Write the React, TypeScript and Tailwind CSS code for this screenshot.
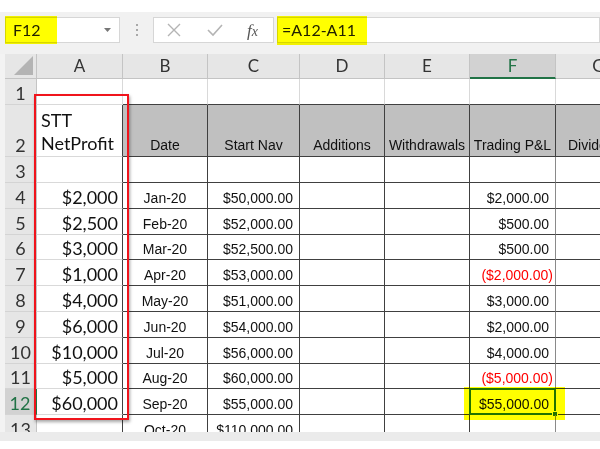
import React from "react";

const LATO = "font-['Lato','Open_Sans',sans-serif]";
const ARIAL = "font-['Liberation_Sans',Arial,sans-serif]";

type Row = {
  n: number;
  h: string;
  a: string;
  b: string;
  c: string;
  f: string;
  neg?: boolean;
};

const rows: Row[] = [
  { n: 3, h: "h-[26px]", a: "", b: "", c: "", f: "" },
  { n: 4, h: "h-[26px]", a: "$2,000", b: "Jan-20", c: "$50,000.00", f: "$2,000.00" },
  { n: 5, h: "h-[26px]", a: "$2,500", b: "Feb-20", c: "$52,000.00", f: "$500.00" },
  { n: 6, h: "h-[25px]", a: "$3,000", b: "Mar-20", c: "$52,500.00", f: "$500.00" },
  { n: 7, h: "h-[26px]", a: "$1,000", b: "Apr-20", c: "$53,000.00", f: "($2,000.00)", neg: true },
  { n: 8, h: "h-[26px]", a: "$4,000", b: "May-20", c: "$51,000.00", f: "$3,000.00" },
  { n: 9, h: "h-[26px]", a: "$6,000", b: "Jun-20", c: "$54,000.00", f: "$2,000.00" },
  { n: 10, h: "h-[26px]", a: "$10,000", b: "Jul-20", c: "$56,000.00", f: "$4,000.00" },
  { n: 11, h: "h-[25px]", a: "$5,000", b: "Aug-20", c: "$60,000.00", f: "($5,000.00)", neg: true },
  { n: 12, h: "h-[26px]", a: "$60,000", b: "Sep-20", c: "$55,000.00", f: "$55,000.00" },
  { n: 13, h: "h-[26px]", a: "", b: "Oct-20", c: "$110,000.00", f: "" },
];

function RowHead({ n, sel }: { n: number; sel?: boolean }) {
  return (
    <div
      className={
        sel
          ? `w-[32px] shrink-0 flex items-end justify-center pb-[1px] bg-[#d2d2d2] border-b border-b-[#d4d4d4] border-r-2 border-r-[#217346] text-[#217346] text-[18px] leading-[20px] ${LATO}`
          : `w-[32px] shrink-0 flex items-end justify-center pb-[1px] bg-[#e6e6e6] border-b border-b-[#d4d4d4] border-r border-r-[#c4c4c4] text-[#333] text-[18px] leading-[20px] ${LATO}`
      }
    >
      {n}
    </div>
  );
}

export default function App() {
  const cols = ["A", "B", "C", "D", "E", "F", "G"];
  const widths = ["w-[86px]", "w-[85px]", "w-[92px]", "w-[85px]", "w-[85px]", "w-[86px]", "w-[86px]"];
  return (
    <div className="w-[600px] h-[449px] bg-white relative overflow-hidden">
      <div className="h-[12px] bg-white" />
      {/* toolbar */}
      <div className="h-[42px] bg-[#f1f1f1] flex items-start pt-[5px] pl-[5px]">
        <div className="w-[115px] h-[26px] bg-white border border-[#d6d6d6] flex items-center">
          <div className={`w-[52px] pl-[7px] text-[16px] text-[#222] ${LATO}`}>F12</div>
          <div className="flex-1" />
          <svg width="7" height="4" viewBox="0 0 7 4" className="mr-[8px]">
            <polygon points="0,0 7,0 3.5,4" fill="#777" />
          </svg>
        </div>
        <div className="w-[33px] h-[26px] flex flex-col items-center justify-center gap-[3px]">
          <div className="w-[2px] h-[2px] bg-[#a8a8a8]" />
          <div className="w-[2px] h-[2px] bg-[#a8a8a8]" />
          <div className="w-[2px] h-[2px] bg-[#a8a8a8]" />
        </div>
        <div className="w-[121px] h-[26px] bg-white border border-[#d6d6d6] flex items-center">
          <svg width="14" height="14" viewBox="0 0 14 14" className="ml-[13px]">
            <path d="M1 1 L13 13 M13 1 L1 13" stroke="#b4b4b4" strokeWidth="1.4" />
          </svg>
          <svg width="16" height="14" viewBox="0 0 16 14" className="ml-[26px]">
            <path d="M1 7 L6 12 L15 2" stroke="#b4b4b4" strokeWidth="1.6" fill="none" />
          </svg>
          <div className="ml-[24px] text-[17px] leading-none text-[#555] italic font-['Liberation_Serif',serif] flex items-end">
            <span>f</span>
            <span className="text-[14px]">x</span>
          </div>
        </div>
        <div className="w-[3px]" />
        <div className="flex-1 h-[26px] bg-white border border-[#d6d6d6] flex items-center">
          <div className={`pl-[4px] text-[16px] text-[#222] ${LATO}`}>=A12-A11</div>
        </div>
      </div>
      {/* grid area */}
      <div className="h-[378px] flex bg-[#f3f3f3]">
        <div className="w-[5px] shrink-0" />
        <div className="flex-1 flex flex-col overflow-hidden bg-white">
          {/* column headers */}
          <div className="h-[25px] flex shrink-0">
            <div className="w-[32px] shrink-0 bg-[#e6e6e6] border-r border-b border-r-[#c4c4c4] border-b-[#c4c4c4] relative">
              <svg width="20" height="20" viewBox="0 0 20 20" className="absolute right-[2px] bottom-[2px]">
                <polygon points="19,0 19,19 0,19" fill="#b4b4b4" />
              </svg>
            </div>
            {cols.map((c, i) =>
              c === "F" ? (
                <div
                  key={c}
                  className={`${widths[i]} shrink-0 bg-[#d2d2d2] border-r border-r-[#c4c4c4] border-b-2 border-b-[#217346] flex items-center justify-center text-[17px] text-[#217346] ${LATO}`}
                >
                  {c}
                </div>
              ) : (
                <div
                  key={c}
                  className={`${widths[i]} shrink-0 bg-[#e6e6e6] border-r border-b border-r-[#c4c4c4] border-b-[#c4c4c4] flex items-center justify-center text-[17px] text-[#333] ${LATO}`}
                >
                  {c}
                </div>
              )
            )}
          </div>
          {/* row 1 */}
          <div className="h-[26px] flex shrink-0">
            <RowHead n={1} />
            <div className="w-[86px] shrink-0 border-r border-b border-r-[#d9d9d9] border-b-[#d9d9d9]" />
            {widths.slice(1).map((w, i) => (
              <div key={i} className={`${w} shrink-0 border-r border-b border-r-[#d9d9d9] border-b-[#404040]`} />
            ))}
          </div>
          {/* row 2 */}
          <div className="h-[52px] flex shrink-0">
            <RowHead n={2} />
            <div
              className={`w-[86px] shrink-0 border-r border-b border-r-[#404040] border-b-[#d9d9d9] flex flex-col justify-end pl-[4px] pb-[1px] text-[18px] leading-[23px] text-[#111] ${LATO}`}
            >
              <div>STT</div>
              <div>NetProfit</div>
            </div>
            {["Date", "Start Nav", "Additions", "Withdrawals", "Trading P&L", "Dividends"].map((t, i) => (
              <div
                key={t}
                className={`${widths[i + 1]} shrink-0 bg-[#c0c0c0] border-r border-b border-r-[#404040] border-b-[#404040] flex items-end justify-center pb-[3px] text-[14px] leading-[16px] text-[#111] whitespace-nowrap ${ARIAL}`}
              >
                <span className={i === 5 ? "pl-[12px] w-full" : ""}>{t}</span>
              </div>
            ))}
          </div>
          {rows.map((r) => (
            <div key={r.n} className={`${r.h} flex shrink-0`}>
              <RowHead n={r.n} sel={r.n === 12} />
              <div
                className={`w-[86px] shrink-0 border-r border-b border-r-[#404040] border-b-[#d9d9d9] flex items-end justify-end pr-[4px] pb-[1px] text-[18px] leading-[20px] text-[#111] ${LATO}`}
              >
                {r.a}
              </div>
              <div
                className={`w-[85px] shrink-0 border-r border-b border-r-[#404040] border-b-[#404040] flex items-end justify-center pb-[2px] text-[14px] leading-[16px] text-[#111] ${ARIAL}`}
              >
                {r.b}
              </div>
              <div
                className={`w-[92px] shrink-0 border-r border-b border-r-[#404040] border-b-[#404040] flex items-end justify-end pr-[6px] pb-[2px] text-[14px] leading-[16px] text-[#111] whitespace-nowrap ${ARIAL}`}
              >
                {r.c}
              </div>
              <div className="w-[85px] shrink-0 border-r border-b border-r-[#404040] border-b-[#404040]" />
              <div className="w-[85px] shrink-0 border-r border-b border-r-[#404040] border-b-[#404040]" />
              <div
                className={
                  r.neg
                    ? `w-[86px] shrink-0 border-r border-b border-r-[#8a8a8a] border-b-[#404040] flex items-end justify-end pr-[2px] pb-[2px] text-[14px] leading-[16px] text-[#ff0000] whitespace-nowrap ${ARIAL}`
                    : `w-[86px] shrink-0 border-r border-b border-r-[#8a8a8a] border-b-[#404040] flex items-end justify-end pr-[6px] pb-[2px] text-[14px] leading-[16px] text-[#111] whitespace-nowrap relative ${ARIAL}`
                }
              >
                {r.f}
                {r.n === 12 && (
                  <>
                    <div className="absolute -left-px -top-px -right-px -bottom-px border-2 border-[#217346]" />
                    <div className="absolute -right-[3px] -bottom-[3px] w-[6px] h-[6px] bg-[#217346] border border-white" />
                  </>
                )}
              </div>
              <div className="w-[86px] shrink-0 border-b border-b-[#404040]" />
            </div>
          ))}
        </div>
      </div>
      <div className="h-[9px] bg-[#ebebeb]" />

      {/* red annotation rectangle */}
      <div className="absolute left-[34px] top-[94px] w-[95px] h-[326px] border-[2.5px] border-[#f0141c] shadow-[1px_2px_3px_rgba(0,0,0,0.35)] pointer-events-none" />

      {/* yellow highlighter overlays */}
      <div className="absolute left-[5px] top-[16px] w-[52px] h-[28px] bg-[#ffff00] mix-blend-multiply pointer-events-none" />
      <div className="absolute left-[277px] top-[16px] w-[90px] h-[29px] bg-[#ffff00] mix-blend-multiply pointer-events-none" />
      <div className="absolute left-[464px] top-[387px] w-[101px] h-[33px] bg-[#ffff00] mix-blend-multiply pointer-events-none" />
    </div>
  );
}
